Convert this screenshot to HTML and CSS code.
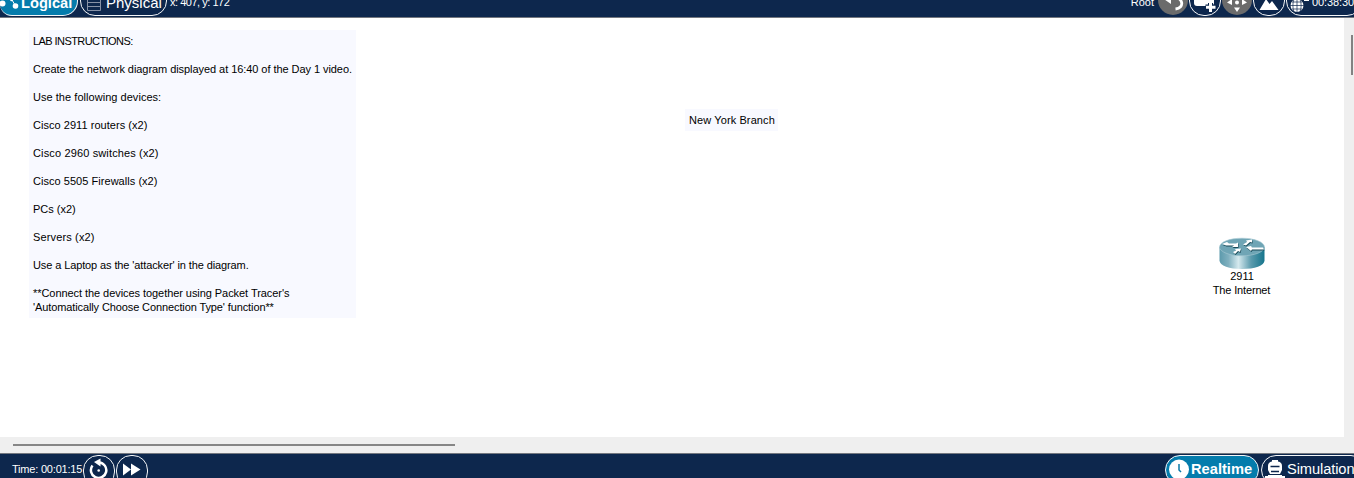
FILE: index.html
```html
<!DOCTYPE html>
<html lang="en">
<head>
<meta charset="utf-8">
<title>Packet Tracer</title>
<link rel="stylesheet" href="styles.css">
</head>
<body>
<div class="app">
  <header class="bar topbar">
    <div class="tab logical"><svg width="20" height="32" viewBox="0 0 20 32"><path d="M11.500 15L15.500 22" stroke="#fff" stroke-width="1"/><circle cx="2.500" cy="19.500" r="3" fill="#fff"/><circle cx="15.500" cy="22" r="2.800" fill="#fff"/><circle cx="11.500" cy="16" r="1.300" fill="#fff"/></svg><b>Logical</b></div>
    <div class="tab physical"><svg width="14" height="32" viewBox="0 0 14 32"><path d="M.5 8V26.500H13.500V8M.5 14.500H13.500M.5 18.500H13.500M.5 22.500H13.500" fill="none" stroke="#8792a6"/></svg><span>Physical</span></div>
    <span class="coords">x: 407, y: 172</span>
    <div class="spacer"></div>
    <span class="root">Root</span>
    <div class="round gray"><svg width="30" height="30" viewBox="0 0 30 30"><path d="M11 13H16C25 12 27 23 17.500 24" fill="none" stroke="#fff" stroke-width="2.800"/><path d="M6.500 14.500L13 9V19Z" fill="#fff"/></svg></div>
    <div class="round outline"><svg width="30" height="30" viewBox="0 0 30 30"><rect x="4" y="8" width="20" height="13" rx="3" fill="#fff"/><path d="M20.500 18V27M15.500 22H25.500" stroke="#0d274d" stroke-width="5"/><path d="M20.500 18V27M16 22.300H25.500" stroke="#fff" stroke-width="3"/></svg></div>
    <div class="round gray"><svg width="30" height="30" viewBox="0 0 30 30"><path d="M12 22.500H18L15 27ZM10 14V20L5 17.500ZM20 14V20L25 17.500ZM12 12H18L15 7Z" fill="#fff"/><circle cx="15" cy="17.500" r="2" fill="#fff"/></svg></div>
    <div class="round outline"><svg width="30" height="30" viewBox="0 0 30 30"><path d="M5.500 25L12 14L15.500 19L18 16L24.500 25Z" fill="#fff"/></svg></div>
    <div class="clock"><svg width="22" height="30" viewBox="0 0 22 30"><circle cx="7" cy="20.500" r="6.500" fill="#fff"/><path d="M7 14V27M0 20.500H14M2 17H12M2 24H12M4 14C2.500 18 2.500 23 4 27M10 14C11.500 18 11.500 23 10 27" fill="none" stroke="#0d274d" stroke-width=".7"/><path d="M14 15H19" stroke="#fff" stroke-width="2"/></svg><span>00:38:30</span></div>
  </header>

  <main class="workspace">
    <section class="canvas">
      <div class="note instructions">
        <p class="heading">LAB INSTRUCTIONS:</p>
        <p class="snug">Create the network diagram displayed at 16:40 of the Day 1 video.</p>
        <p class="airy">Use the following devices:</p>
        <p class="airy">Cisco 2911 routers (x2)</p>
        <p class="wide">Cisco 2960 switches (x2)</p>
        <p class="airy">Cisco 5505 Firewalls (x2)</p>
        <p>PCs (x2)</p>
        <p class="wide">Servers (x2)</p>
        <p class="tight">Use a Laptop as the 'attacker' in the diagram.</p>
        <p><span class="snug">**Connect the devices together using Packet Tracer's</span><br><span class="tight">'Automatically Choose Connection Type' function**</span></p>
      </div>
      <div class="note branch">New York Branch</div>
      <div class="device">
        <svg width="46" height="32" viewBox="0 0 46 32">
          <defs>
            <linearGradient id="side"><stop offset="0" stop-color="#5c9aac"/><stop offset=".2" stop-color="#80b0bf"/><stop offset=".42" stop-color="#d5e9ee"/><stop offset=".7" stop-color="#5b9bad"/><stop offset="1" stop-color="#16758c"/></linearGradient>
            <g id="arrows"><path d="M3 7L8 5L10 6.500H17L19 5.500V10H13L15 8.500H7Z"/><path d="M24 7.500L28 5L27 3.500L33 2.500V5.500L31 5L27 8.500Z"/><path d="M27 10L32 9L33 10.500L44 10.500L45 12.500H33L32 14Z"/><path d="M14 15L17 13.500L16 12L22 11.500L21 15L19 14L16 17Z"/></g>
          </defs>
          <path d="M.5 10V23.500C.5 28.500 10.500 32 23 32S45.500 28.500 45.500 23.500V10Z" fill="url(#side)"/>
          <ellipse cx="23" cy="10" rx="22.500" ry="8.800" fill="#6fa5b5" stroke="#a8cad4" stroke-width=".6"/>
          <use href="#arrows" fill="#174957" transform="translate(.5 1)"/><use href="#arrows" fill="#fff"/>
        </svg>
        <span>2911</span><span class="place">The Internet</span>
      </div>
    </section>
    <div class="vscroll"><i></i></div>
    <div class="hscroll"><i></i></div>
  </main>

  <footer class="bar bottombar">
    <span class="time">Time: 00:01:15</span>
    <div class="round outline"><svg width="30" height="30" viewBox="0 0 30 30"><path d="M8.500 9.500A7.700 7.700 0 1 0 15 6.500" fill="none" stroke="#fff" stroke-width="2.500"/><path d="M10 6L16.500 2.500V10.500Z" fill="#fff"/><circle cx="14.700" cy="14.500" r="1.300" fill="#fff"/></svg></div>
    <div class="round outline"><svg width="30" height="30" viewBox="0 0 30 30"><path d="M6 7.500L14 13.500L6 19.500ZM14 7.500L23.500 13.500L14 19.500Z" fill="#fff"/></svg></div>
    <div class="spacer"></div>
    <div class="mode realtime"><svg width="22" height="30" viewBox="0 0 22 30"><circle cx="11" cy="13.500" r="10" fill="#fff"/><path d="M11 8V14L13 16" fill="none" stroke="#0a7aa8" stroke-width="1.500"/></svg><b>Realtime</b></div>
    <div class="mode simulation"><svg width="22" height="30" viewBox="0 0 22 30"><path d="M4 14V10Q4 6 8 5.500V4H14V5.500Q18 6 18 10V14L16 18H18V20H21V30H1V20H4V18H6Z" fill="#fff"/><path d="M6.500 10.500H15.500M7 15.500H15" stroke="#0d274d" stroke-width="1.500"/><path d="M4 18.500H18" stroke="#0d274d"/></svg><span>Simulation</span></div>
  </footer>
</div>
</body>
</html>
```
FILE: styles.css
```css
* { box-sizing: border-box; }
body { margin: 0; font: 11px/14px "Liberation Sans", Arial, sans-serif; color: #000; }
svg { display: block; flex: none; }
.app { width: 1354px; height: 478px; display: flex; flex-direction: column; overflow: hidden; }
.bar { display: flex; flex: none; background: #0d274d; color: #fff; overflow: hidden; white-space: nowrap; }
.bar > * { flex: none; }
.bar > .spacer { flex: 1; }
.topbar { height: 18px; align-items: flex-end; padding-bottom: 1px; border-bottom: 1px solid #73777f; }
.tab, .round, .clock { height: 32px; border: 1px solid #f4f6f8; border-radius: 15px; display: flex; align-items: center; }
.tab { font-size: 14.67px; }
.tab span, .tab b { line-height: 18px; margin-top: 5px; }
.logical { width: 78px; border-left: 0; border-radius: 0 15px 15px 12px; background: #047cac; margin-right: 2px; }
.logical b { margin-left: 1px; }
.physical { width: 87px; padding-left: 6px; margin-right: 3px; }
.physical span { margin-left: 5px; font-size: 15px; }
.coords { padding-bottom: 7px; letter-spacing: -.48px; }
.root { padding-bottom: 7px; margin-right: 4px; }
.round { width: 32px; justify-content: center; }
.gray { width: 30px; height: 31px; margin: 0 1px 1px 0; border: 0; background: #6b6b6b; }
.topbar .outline { margin-right: 1px; }
.topbar .outline + .clock { margin-right: -8px; }
.clock { width: 76px; padding-left: 3px; }
.clock span { margin-top: 4px; letter-spacing: -.1px; }
.workspace { height: 435px; display: grid; grid-template: 419px 16px / 1344px 10px; background: #efefef; }
.canvas { background: #fff; position: relative; overflow: hidden; }
.note { position: absolute; background: #f8f9ff; white-space: nowrap; padding: 4px; }
.instructions { left: 29px; top: 12px; width: 327px; height: 288px; }
.instructions p { margin: 0 0 14px; }
.heading { letter-spacing: -.57px; }
.snug { letter-spacing: -.06px; }
.tight { letter-spacing: -.11px; }
.airy { letter-spacing: .04px; }
.wide { letter-spacing: .14px; }
.branch { left: 685px; top: 91px; width: 93px; height: 22px; letter-spacing: .1px; }
.device { position: absolute; left: 1196px; top: 219px; width: 92px; display: flex; flex-direction: column; align-items: center; }
.place { letter-spacing: -.15px; margin-left: -1px; }
.vscroll { padding: 17px 1px 0 7px; }
.vscroll i { display: block; width: 2px; height: 40px; background: #828282; }
.hscroll { grid-column: 1 / 3; padding: 7px 0 0 13px; }
.hscroll i { display: block; width: 442px; height: 2px; background: #868686; }
.bottombar { height: 25px; border-top: 1px solid #73777f; align-items: flex-start; padding-top: 1px; }
.time { width: 71px; margin: 7px 0 0 12px; letter-spacing: -.2px; }
.bottombar .outline { margin-right: 1px; }
.mode { height: 30px; border: 1px solid #f4f6f8; border-radius: 15px; display: flex; font-size: 14.67px; line-height: 26px; }
.realtime { width: 94px; background: #047cac; padding-left: 2px; margin-right: 2px; }
.realtime b { margin-left: 1px; }
.simulation { width: 105px; margin-right: -12px; padding-left: 2px; }
.simulation span { margin-left: 1px; letter-spacing: -.1px; }
```
